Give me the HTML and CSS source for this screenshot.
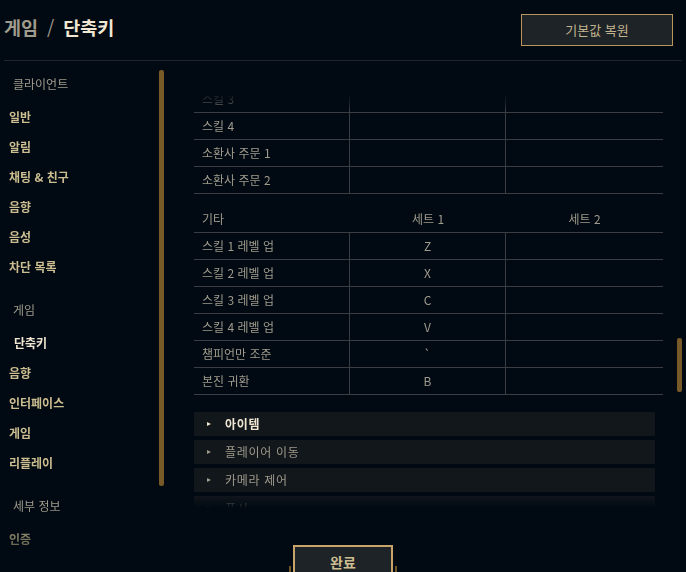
FILE: index.html
```html
<!DOCTYPE html>
<html lang="ko">
<head>
<meta charset="utf-8">
<title>게임 / 단축키</title>
<link rel="stylesheet" href="styles.css">
</head>
<body>
<div class="app">
  <header class="top">
    <h1 class="crumb"><span class="crumb-parent">게임</span><span class="crumb-sep">/</span><span class="crumb-cur">단축키</span></h1>
    <button class="btn-restore">기본값 복원</button>
  </header>

  <div class="content">
    <nav class="side">
      <div class="side-list">
        <div class="side-head">클라이언트</div>
        <div class="side-item">일반</div>
        <div class="side-item">알림</div>
        <div class="side-item">채팅 &amp; 친구</div>
        <div class="side-item">음향</div>
        <div class="side-item">음성</div>
        <div class="side-item">차단 목록</div>
        <div class="side-head gap">게임</div>
        <div class="side-item active">단축키</div>
        <div class="side-item">음향</div>
        <div class="side-item">인터페이스</div>
        <div class="side-item">게임</div>
        <div class="side-item">리플레이</div>
        <div class="side-head gap">세부 정보</div>
        <div class="side-item">인증</div>
      </div>
      <div class="side-track"><div class="side-thumb"></div></div>
    </nav>

    <main class="main">
      <div class="viewport">
        <div class="keytable first">
          <div class="row"><div class="cell name">스킬 3</div><div class="cell key"></div><div class="cell key last"></div></div>
          <div class="row"><div class="cell name">스킬 4</div><div class="cell key"></div><div class="cell key last"></div></div>
          <div class="row"><div class="cell name">소환사 주문 1</div><div class="cell key"></div><div class="cell key last"></div></div>
          <div class="row"><div class="cell name">소환사 주문 2</div><div class="cell key"></div><div class="cell key last"></div></div>
        </div>

        <div class="keytable second">
          <div class="row head"><div class="cell name">기타</div><div class="cell key">세트 1</div><div class="cell key last">세트 2</div></div>
          <div class="row"><div class="cell name">스킬 1 레벨 업</div><div class="cell key">Z</div><div class="cell key last"></div></div>
          <div class="row"><div class="cell name">스킬 2 레벨 업</div><div class="cell key">X</div><div class="cell key last"></div></div>
          <div class="row"><div class="cell name">스킬 3 레벨 업</div><div class="cell key">C</div><div class="cell key last"></div></div>
          <div class="row"><div class="cell name">스킬 4 레벨 업</div><div class="cell key">V</div><div class="cell key last"></div></div>
          <div class="row"><div class="cell name">챔피언만 조준</div><div class="cell key">`</div><div class="cell key last"></div></div>
          <div class="row"><div class="cell name">본진 귀환</div><div class="cell key">B</div><div class="cell key last"></div></div>
        </div>

        <div class="groups">
          <div class="group open"><span class="caret"></span><span class="group-label">아이템</span></div>
          <div class="group"><span class="caret"></span><span class="group-label">플레이어 이동</span></div>
          <div class="group"><span class="caret"></span><span class="group-label">카메라 제어</span></div>
          <div class="group"><span class="caret"></span><span class="group-label">표시</span></div>
        </div>
      </div>
      <div class="main-track"><div class="main-thumb"></div></div>
    </main>
  </div>

  <div class="foot">
    <button class="btn-done">완료</button>
  </div>
</div>
</body>
</html>
```

FILE: styles.css
```css
* { box-sizing: border-box; }

html, body {
  margin: 0;
  padding: 0;
  background: #010a13;
  height: 100%;
}

body {
  font-family: "Noto Sans CJK KR", "Noto Sans", sans-serif;
  color: #a09b8c;
  overflow: hidden;
}

.app {
  position: relative;
  width: 686px;
  height: 572px;
}

/* ---------- header ---------- */
.top {
  display: flex;
  align-items: center;
  justify-content: space-between;
  height: 61px;
  margin: 0 4px;
  padding: 0 10px 0 0;
  border-bottom: 1px solid #1f252b;
}

.crumb {
  margin: 0 0 7px 0;
  font-size: 18.5px;
  font-weight: 700;
  line-height: 24px;
  display: flex;
}

.crumb-parent { color: #a09b8c; }
.crumb-sep { color: #a09b8c; margin: 0 9px; font-weight: 400; }
.crumb-cur { color: #f0e6d2; }

.btn-restore {
  width: 152px;
  height: 32px;
  margin-right: -1px;
  margin-bottom: 1px;
  background: #1e2328;
  border: 1.5px solid #b8955a;
  color: #c2b48e;
  font-family: inherit;
  font-size: 13px;
  padding: 0;
}

/* ---------- body ---------- */
.content {
  display: flex;
  height: 511px;
}

.side {
  display: flex;
  width: 164px;
  flex: none;
}

.side-list {
  width: 159px;
  padding-top: 8px;
  -webkit-mask-image: linear-gradient(to bottom, #000 0, #000 445px, rgba(0,0,0,0.45) 490px);
  mask-image: linear-gradient(to bottom, #000 0, #000 445px, rgba(0,0,0,0.45) 490px);
}

.side-head {
  height: 30px;
  line-height: 30px;
  padding-left: 13px;
  margin-bottom: 3px;
  font-size: 12px;
  color: #a09b8c;
}

.side-head.gap { margin-top: 13px; }

.side-item {
  height: 30px;
  line-height: 30px;
  padding-left: 9px;
  font-size: 12px;
  font-weight: 700;
  color: #cdbe91;
}

.side-item.active {
  color: #f0e6d2;
  padding-left: 14px;
}

.side-track {
  width: 5px;
  padding-top: 9px;
}

.side-thumb {
  width: 5px;
  height: 416px;
  background: #785a28;
  border-radius: 2px;
}

.main {
  flex: 1;
  display: flex;
  padding: 35px 4px 0 30px;
}

.viewport {
  width: 469px;
  height: 412px;
  overflow: hidden;
  -webkit-mask-image: linear-gradient(to bottom, rgba(0,0,0,0.15) 0, rgba(0,0,0,0.35) 6px, #000 14px, #000 calc(100% - 13px), transparent 100%);
  mask-image: linear-gradient(to bottom, rgba(0,0,0,0.15) 0, rgba(0,0,0,0.35) 6px, #000 14px, #000 calc(100% - 13px), transparent 100%);
}

.keytable.first { margin-top: -10px; }
.keytable.second { margin-top: 12px; }

.row {
  display: grid;
  grid-template-columns: 156px 156px 1fr;
  height: 27px;
  border-bottom: 1px solid #3a3d42;
}

.cell {
  font-size: 12px;
  line-height: 26px;
  color: #a09b8c;
  white-space: nowrap;
}

.cell.name {
  padding-left: 8px;
  border-right: 1px solid #3a3d42;
}

.cell.key {
  text-align: center;
  border-right: 1px solid #3a3d42;
}

.cell.key.last { border-right: none; }

.row.head .cell { border-right: none; }

.groups {
  margin-top: 17px;
  width: 461px;
  display: flex;
  flex-direction: column;
  gap: 4px;
}

.group {
  height: 24px;
  background: #12171c;
  display: flex;
  align-items: center;
  padding-left: 13px;
  font-size: 12px;
  letter-spacing: 0.7px;
  line-height: 22px;
  color: #a09b8c;
}

.caret {
  width: 0;
  height: 0;
  border-top: 2.5px solid transparent;
  border-bottom: 2.5px solid transparent;
  border-left: 4px solid #a09b8c;
  margin-right: 14px;
}

.group.open { color: #f0e6d2; font-weight: 700; }
.group.open .caret { border-left-color: #f0e6d2; }

.main-track {
  width: 5px;
  margin-left: 14px;
  padding-top: 242px;
}

.main-thumb {
  width: 5px;
  height: 54px;
  background: #785a28;
  border-radius: 2px;
}

/* ---------- footer ---------- */
.foot {
  position: absolute;
  left: 0;
  right: 0;
  top: 545px;
  display: flex;
  justify-content: center;
}

.btn-done {
  position: relative;
  width: 100px;
  height: 34px;
  background: #1e2328;
  border: 2px solid #c8a46a;
  color: #cdbe91;
  font-family: inherit;
  font-size: 14px;
  font-weight: 700;
  padding: 0;
  line-height: 16px;
}

.btn-done::before,
.btn-done::after {
  content: "";
  position: absolute;
  top: 19px;
  width: 2px;
  height: 14px;
  background: #6f5526;
}

.btn-done::before { left: -6px; }
.btn-done::after { right: -6px; }
```
